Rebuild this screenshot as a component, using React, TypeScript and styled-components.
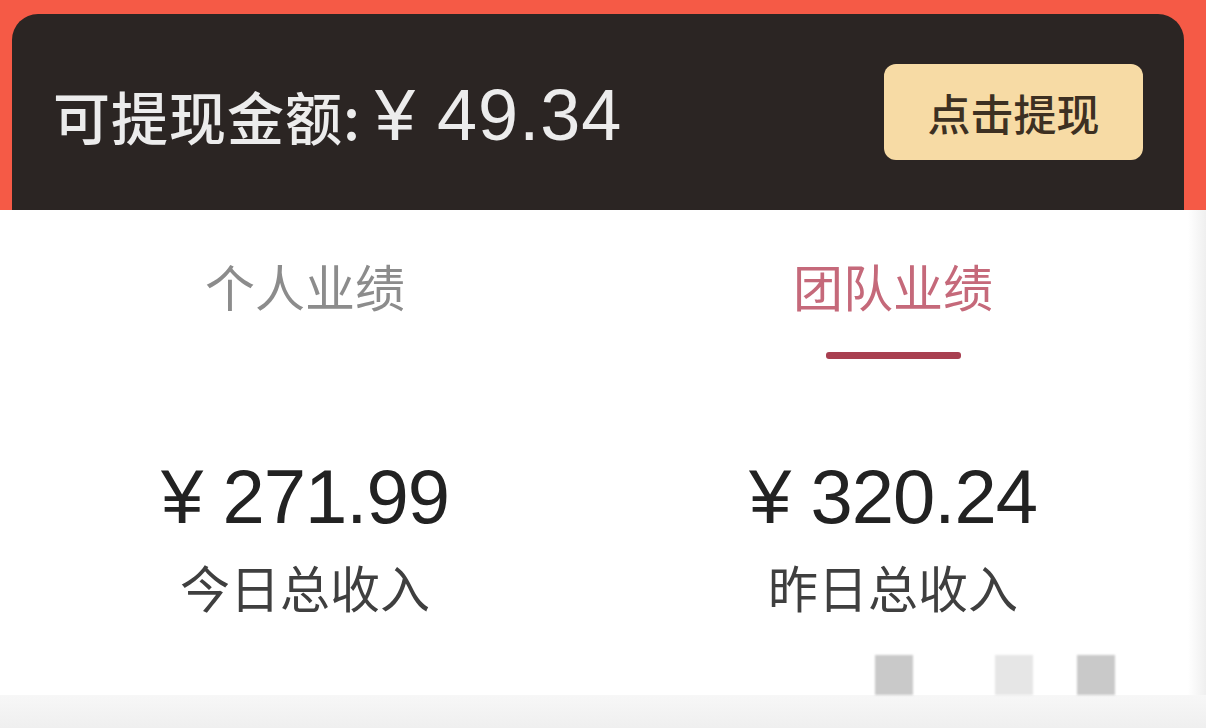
import styled, { createGlobalStyle } from 'styled-components';

const GlobalStyle = createGlobalStyle`
    html, body {
        margin: 0;
        padding: 0;
        background: #ffffff;
    }
    #root {
        width: 1206px;
        height: 728px;
        overflow: hidden;
    }
`

const Page = styled.div`
    width: 1206px;
    height: 728px;
    display: flex;
    flex-direction: column;
    font-family: "Liberation Sans", "Noto Sans CJK SC", sans-serif;
    background: #ffffff;
`
const Top = styled.div`
    background: #f55a46;
    padding: 14px 22px 0 12px;
`
const Header = styled.div`
    height: 196px;
    background: #2b2523;
    border-radius: 26px 26px 0 0;
    display: flex;
    align-items: center;
    justify-content: space-between;
    padding: 0 41px 0 41px;
    box-sizing: border-box;
`
const Balance = styled.div`
    color: #ececec;
    margin-top: 6px;
    white-space: nowrap;
`
const BalanceLabel = styled.span`
    font-family: "Noto Sans CJK SC", sans-serif;
    font-size: 57px;
    font-weight: 500;
    letter-spacing: 1px;
`
const BalanceValue = styled.span`
    font-size: 72px;
    margin-left: 14px;
    letter-spacing: 1px;
`
const WithdrawButton = styled.button`
    width: 259px;
    height: 96px;
    border: none;
    border-radius: 12px;
    background: #f7dba5;
    color: #3d3022;
    font-family: "Noto Sans CJK SC", sans-serif;
    font-size: 43px;
    font-weight: 500;
    cursor: pointer;
`
const Body = styled.div`
    flex: 1;
    display: flex;
    flex-direction: column;
    background: linear-gradient(to right, #ffffff 98.5%, #efefef);
`
const Columns = styled.div`
    display: grid;
    grid-template-columns: 588px 588px;
    padding: 0 19px 0 11px;
`
const Tab = styled.div`
    display: flex;
    flex-direction: column;
    align-items: center;
    padding-top: 40px;
    height: 160px;
    box-sizing: border-box;
`
const TabLabel = styled.div<{ active?: boolean }>`
    font-family: "Noto Sans CJK SC", sans-serif;
    font-size: 50px;
    line-height: 70px;
    color: ${(props) => (props.active ? '#c5697a' : '#8c8c8c')};
`
const Underline = styled.div`
    width: 135px;
    height: 7px;
    margin-top: 32px;
    border-radius: 3px;
    background: #a83f50;
`
const Stat = styled.div`
    display: flex;
    flex-direction: column;
    align-items: center;
    padding-top: 87px;
`
const Amount = styled.div`
    font-size: 76px;
    line-height: 80px;
    color: #222222;
    letter-spacing: -1px;
`
const StatLabel = styled.div`
    margin-top: 17px;
    font-family: "Noto Sans CJK SC", sans-serif;
    font-size: 50px;
    line-height: 64px;
    color: #3f3f3f;
`
const Footer = styled.div`
    flex: 1;
    display: flex;
    flex-direction: column;
    justify-content: space-between;
    padding-top: 37px;
`
const Marks = styled.div`
    display: flex;
    justify-content: flex-end;
    padding-right: 91px;
`
const Mark = styled.div<{ $faded?: boolean; $gap: number }>`
    width: 38px;
    height: 40px;
    margin-left: ${(props) => props.$gap}px;
    background: ${(props) => (props.$faded ? '#e6e6e6' : '#c9c9c9')};
    filter: blur(1px);
`
const Band = styled.div`
    height: 33px;
    background: linear-gradient(#f7f7f7, #efefef);
`

const stats = [
    { amount: '¥ 271.99', label: '今日总收入' },
    { amount: '¥ 320.24', label: '昨日总收入' },
];

function App() {
    return (
        <Page>
            <GlobalStyle />
            <Top>
                <Header>
                    <Balance>
                        <BalanceLabel>可提现金额:</BalanceLabel>
                        <BalanceValue>¥ 49.34</BalanceValue>
                    </Balance>
                    <WithdrawButton>点击提现</WithdrawButton>
                </Header>
            </Top>
            <Body>
                <Columns>
                    <Tab>
                        <TabLabel>个人业绩</TabLabel>
                    </Tab>
                    <Tab>
                        <TabLabel active>团队业绩</TabLabel>
                        <Underline />
                    </Tab>
                </Columns>
                <Columns>
                    {stats.map((s) => (
                        <Stat key={s.label}>
                            <Amount>{s.amount}</Amount>
                            <StatLabel>{s.label}</StatLabel>
                        </Stat>
                    ))}
                </Columns>
                <Footer>
                    <Marks>
                        <Mark $gap={0} />
                        <Mark $gap={82} $faded />
                        <Mark $gap={44} />
                    </Marks>
                    <Band />
                </Footer>
            </Body>
        </Page>
    );
}

export default App;
